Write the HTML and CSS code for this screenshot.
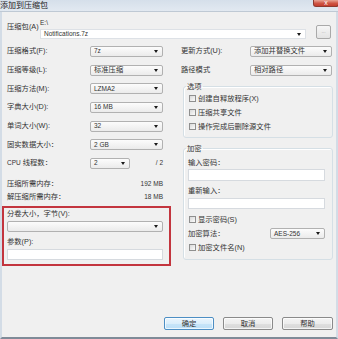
FILE: index.html
```html
<!DOCTYPE html>
<html lang="zh-CN">
<head>
<meta charset="utf-8">
<title>添加到压缩包</title>
<link rel="stylesheet" href="styles.css">
</head>
<body>
<div class="win">
  <div class="titlebar">
    <span class="title">添加到压缩包</span>
    <span class="close">x</span>
  </div>
  <div class="client">
    <div class="archive-row">
      <div class="archive-lbl">压缩包(A)</div>
      <div class="archive-main">
        <div class="path"><span class="v">E:\</span></div>
        <div class="archive-line">
          <div class="combo edit"><span class="v">Notifications.7z</span><i class="arr"></i></div>
          <div class="browse">...</div>
        </div>
      </div>
    </div>

    <div class="cols">
      <div class="left">
        <div class="lrow"><span class="lbl">压缩格式(F):</span><div class="combo w73"><span class="v">7z</span><i class="arr"></i></div></div>
        <div class="lrow"><span class="lbl">压缩等级(L):</span><div class="combo w73"><span>标准压缩</span><i class="arr"></i></div></div>
        <div class="lrow"><span class="lbl">压缩方法(M):</span><div class="combo w73"><span class="v">LZMA2</span><i class="arr"></i></div></div>
        <div class="lrow"><span class="lbl">字典大小(D):</span><div class="combo w73"><span class="v">16 MB</span><i class="arr"></i></div></div>
        <div class="lrow"><span class="lbl">单词大小(W):</span><div class="combo w73"><span class="v">32</span><i class="arr"></i></div></div>
        <div class="lrow"><span class="lbl">固实数据大小：</span><div class="combo w73"><span class="v">2 GB</span><i class="arr"></i></div></div>
        <div class="lrow"><span class="lbl cpu-lbl"><span class="v">CPU</span> 线程数：</span><div class="combo w40"><span class="v">2</span><i class="arr"></i></div><span class="slash v">/ 2</span></div>

        <div class="mem">
          <div class="mrow"><span>压缩所需内存：</span><span class="v">192 MB</span></div>
          <div class="mrow"><span>解压缩所需内存：</span><span class="v">18 MB</span></div>
        </div>

        <div class="vol">
          <div class="vlbl">分卷大小，字节(V):</div>
          <div class="combo full"><span></span><i class="arr"></i></div>
          <div class="vlbl second">参数(P):</div>
          <div class="input full"></div>
        </div>
      </div>

      <div class="right">
        <div class="rrow"><span class="lbl">更新方式(U):</span><div class="combo w82"><span>添加并替换文件</span><i class="arr"></i></div></div>
        <div class="rrow"><span class="lbl">路径模式</span><div class="combo w82"><span>相对路径</span><i class="arr"></i></div></div>

        <fieldset class="grp opts">
          <legend>选项</legend>
          <div class="cb"><i class="box"></i><span>创建自释放程序(X)</span></div>
          <div class="cb"><i class="box"></i><span>压缩共享文件</span></div>
          <div class="cb"><i class="box"></i><span>操作完成后删除源文件</span></div>
        </fieldset>

        <fieldset class="grp enc">
          <legend>加密</legend>
          <div class="elbl">输入密码：</div>
          <div class="input pw1"></div>
          <div class="elbl second">重新输入：</div>
          <div class="input pw2"></div>
          <div class="cb first"><i class="box"></i><span>显示密码(S)</span></div>
          <div class="algo"><span>加密算法：</span><div class="combo w55"><span class="v">AES-256</span><i class="arr"></i></div></div>
          <div class="cb"><i class="box"></i><span>加密文件名(N)</span></div>
        </fieldset>
      </div>
    </div>

    <div class="btns">
      <div class="btn def">确定</div>
      <div class="btn">取消</div>
      <div class="btn wide">帮助</div>
    </div>
  </div>
</div>
</body>
</html>
```

FILE: styles.css
```css
* { box-sizing: border-box; }
html, body { margin: 0; padding: 0; }
body {
  width: 338px;
  height: 339px;
  overflow: hidden;
  background: #f0f0f0;
  font-family: "Liberation Sans", "Noto Sans CJK SC", sans-serif;
  font-size: 7.3px;
  line-height: 10px;
  color: #333;
}
.win {
  width: 338px;
  height: 339px;
  display: flex;
  flex-direction: column;
}
.titlebar {
  height: 12px;
  flex: none;
  display: flex;
  justify-content: space-between;
  align-items: flex-start;
  background: linear-gradient(#d5dfea, #e2e9f1);
  border-bottom: 1px solid #bfc9d4;
  overflow: hidden;
}
.title {
  font-family: "Noto Sans CJK SC", sans-serif;
  font-size: 8px;
  line-height: 10px;
  margin-left: 0;
  color: #1c1c1c;
}
.close {
  width: 26px;
  height: 7px;
  margin-right: -1px;
  background: linear-gradient(#e8a596, #cf5544 55%, #c43e2e);
  border: 1px solid #8e3a30;
  border-top: none;
  border-radius: 0 0 3px 3px;
  color: #fff;
  font-size: 7px;
  line-height: 5px;
  text-align: center;
}
.client {
  flex: 1;
  display: flex;
  flex-direction: column;
  background: #f0f0f0;
  border-left: 2px solid #d3dce6;
  border-right: 2px solid #d3dce6;
  border-bottom: 2px solid #7f8b98;
}
.v {
  font-family: "Liberation Sans", sans-serif;
  font-size: 6.5px;
}

/* archive row */
.archive-row {
  height: 30px;
  display: flex;
  padding-left: 5px;
  padding-right: 5px;
}
.archive-lbl {
  width: 33px;
  align-self: center;
}
.archive-main {
  flex: 1;
  padding-top: 6px;
}
.path { height: 10px; line-height: 10px; }
.archive-line {
  margin-top: -3px;
  height: 14px;
  display: flex;
  align-items: flex-end;
  justify-content: space-between;
}
.browse {
  width: 15px;
  height: 14px;
  border: 1px solid #a9a9a9;
  border-radius: 2px;
  background: linear-gradient(#f6f6f6, #e3e3e3);
  color: #a0a0a0;
  font-size: 5px;
  line-height: 10px;
  text-align: center;
}

/* combo */
.combo {
  height: 11px;
  display: flex;
  align-items: center;
  justify-content: space-between;
  padding: 0 4px 0 3px;
  border: 1px solid #b1b1b1;
  border-radius: 2px;
  background: linear-gradient(#fcfcfc, #ebebeb);
  white-space: nowrap;
}
.combo.edit {
  width: 266px;
  height: 10px;
  background: #fff;
  border-color: #dde1e6;
  border-radius: 0;
}
.arr {
  width: 0;
  height: 0;
  border-left: 2.5px solid transparent;
  border-right: 2.5px solid transparent;
  border-top: 3px solid #1a1a1a;
  flex: none;
}
.w73 { width: 73px; }
.w40 { width: 40px; }
.w82 { width: 82px; }
.w55 { width: 55px; margin-right: 3px; }
.full { width: 100%; }

.input {
  height: 11px;
  background: #fff;
  border: 1px solid #d6dadf;
}

/* columns */
.cols {
  display: grid;
  grid-template-columns: 170px 164px;
}
.lrow {
  height: 18.7px;
  display: flex;
  align-items: center;
  padding: 0 9px 0 5px;
}
.lrow .lbl { flex: 1; }
.lrow .cpu-lbl { flex: none; width: 83px; }
.slash { flex: 1; text-align: right; }

.mem {
  margin-top: 5px;
  padding: 0 9px 0 5px;
}
.mrow {
  height: 12.5px;
  display: flex;
  align-items: center;
  justify-content: space-between;
}

.vol {
  margin: 3px 1px 0 0;
  border: 2px solid #c3353e;
  padding: 1px 6px 4px 3px;
}
.vlbl { height: 10px; }
.vol .combo { margin-top: 2px; }
.vlbl.second { margin-top: 5px; }
.vol .input { margin-top: 2px; }

.rrow {
  height: 18.7px;
  display: flex;
  align-items: center;
  padding: 0 4px 0 9px;
}
.rrow .lbl { flex: 1; }

.grp {
  margin: 0 3px 0 11px;
  padding: 0 4px 3px 5px;
  border: 1px solid #d5dfe5;
  border-radius: 3px;
  box-shadow: inset 1px 1px 0 #fff;
  min-width: 0;
}
.grp legend {
  padding: 0 1px;
  margin-left: -3px;
  height: 10px;
  line-height: 10px;
}
.opts { margin-top: 2.6px; }
.enc {
  margin-top: 6px;
  padding: 0 4px 5px 4px;
}
.enc legend { margin-left: -2px; }

.cb {
  height: 14px;
  display: flex;
  align-items: center;
}
.box {
  width: 7px;
  height: 7px;
  border: 1px solid #8f8f8f;
  background: linear-gradient(135deg, #d9d9d9, #fbfbfb);
  margin-right: 2px;
  flex: none;
}
.enc .cb {
  height: 12px;
  margin-top: 2px;
  padding-left: 1px;
}
.enc .cb.first { margin-top: 5px; }
.elbl { height: 10px; margin-top: 4px; }
.elbl.second { margin-top: 5px; }
.pw1 { width: 137px; height: 12px; margin-top: 1px; }
.pw2 { width: 137px; height: 11px; margin-top: 2px; }
.algo {
  height: 12px;
  margin-top: 2px;
  display: flex;
  align-items: center;
  justify-content: space-between;
}

/* buttons */
.btns {
  margin-top: auto;
  display: flex;
  justify-content: flex-end;
  gap: 9px;
  padding: 0 3px 7px 0;
}
.btn {
  width: 50px;
  height: 13px;
  border: 1px solid #8a8a8a;
  border-radius: 2px;
  background: linear-gradient(#f4f4f4 0%, #ececec 50%, #e0e0e0 50%, #d6d6d6 100%);
  box-shadow: inset 0 0 0 1px rgba(255,255,255,0.7);
  text-align: center;
  line-height: 11px;
}
.btn.wide { width: 51px; }
.btn.def {
  border-color: #4c8ec4;
  background: linear-gradient(#eaf5fd 0%, #dbeefb 50%, #c8e5f9 50%, #bcdff7 100%);
}
```
